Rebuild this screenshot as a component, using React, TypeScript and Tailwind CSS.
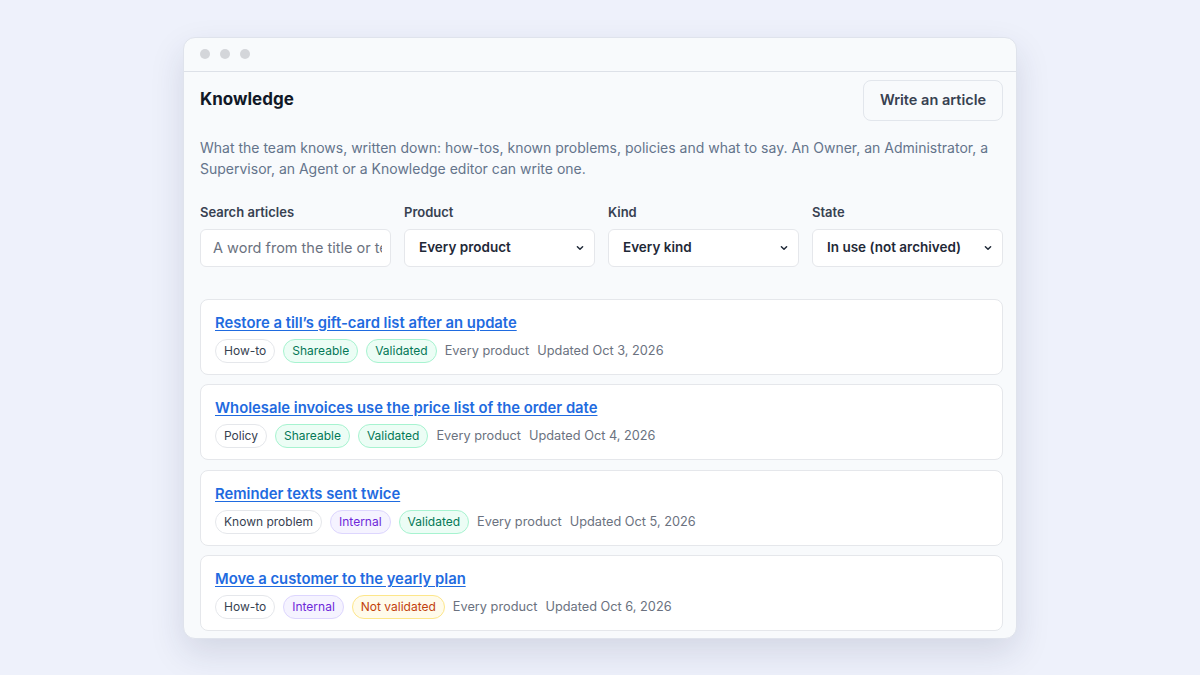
import * as React from 'react';

type Tone = 'plain' | 'green' | 'violet' | 'amber';

type Article = {
  title: string;
  kind: string;
  share: { label: string; tone: Tone };
  check: { label: string; tone: Tone };
  product: string;
  updated: string;
};

const articles: Article[] = [
  {
    title: 'Restore a till’s gift-card list after an update',
    kind: 'How-to',
    share: { label: 'Shareable', tone: 'green' },
    check: { label: 'Validated', tone: 'green' },
    product: 'Every product',
    updated: 'Updated Oct 3, 2026',
  },
  {
    title: 'Wholesale invoices use the price list of the order date',
    kind: 'Policy',
    share: { label: 'Shareable', tone: 'green' },
    check: { label: 'Validated', tone: 'green' },
    product: 'Every product',
    updated: 'Updated Oct 4, 2026',
  },
  {
    title: 'Reminder texts sent twice',
    kind: 'Known problem',
    share: { label: 'Internal', tone: 'violet' },
    check: { label: 'Validated', tone: 'green' },
    product: 'Every product',
    updated: 'Updated Oct 5, 2026',
  },
  {
    title: 'Move a customer to the yearly plan',
    kind: 'How-to',
    share: { label: 'Internal', tone: 'violet' },
    check: { label: 'Not validated', tone: 'amber' },
    product: 'Every product',
    updated: 'Updated Oct 6, 2026',
  },
];

const toneClass: Record<Tone, string> = {
  plain: 'bg-white border-[#e5e7eb] text-[#374151]',
  green: 'bg-[#ecfdf5] border-[#a7f3d0] text-[#047857]',
  violet: 'bg-[#f5f3ff] border-[#ddd6fe] text-[#6d28d9]',
  amber: 'bg-[#fffbeb] border-[#fde68a] text-[#c2410c]',
};

function Tag({ label, tone }: { label: string; tone: Tone }) {
  return (
    <span className={`inline-flex h-6 items-center rounded-full border px-2 text-xs ${toneClass[tone]}`}>
      {label}
    </span>
  );
}

function Chevron() {
  return (
    <svg
      className="pointer-events-none absolute right-2.5 top-1/2 -translate-y-1/2"
      width="10"
      height="10"
      viewBox="0 0 10 10"
      fill="none"
    >
      <path d="M2.4 3.8 5 6.3 7.6 3.8" stroke="#1f2937" strokeWidth="1.5" strokeLinecap="round" strokeLinejoin="round" />
    </svg>
  );
}

function SelectField({ label, value }: { label: string; value: string }) {
  return (
    <label className="flex flex-col gap-2">
      <span className="text-[13px] font-semibold leading-[18px] text-[#374151]">{label}</span>
      <div className="relative">
        <select
          defaultValue={value}
          className="h-[38px] w-full appearance-none rounded-md border border-[#e5e7eb] bg-white pl-3.5 pr-8 text-[13.5px] font-semibold text-[#1f2937] outline-none"
        >
          <option>{value}</option>
        </select>
        <Chevron />
      </div>
    </label>
  );
}

export default function App() {
  return (
    <div
      className="flex h-[675px] w-full items-center justify-center bg-[#eef1fb]"
      style={{ fontFamily: 'Inter, "Noto Sans", sans-serif' }}
    >
      <div className="flex h-[602px] w-[834px] flex-col overflow-hidden rounded-xl border border-[#dfe3ec] bg-[#f8fafc] shadow-[0_14px_34px_rgba(30,41,80,0.13)]">
        {/* title bar */}
        <div className="flex h-[34px] shrink-0 items-center gap-2.5 border-b border-[#dde1e8] px-4">
          <span className="h-2.5 w-2.5 rounded-full bg-[#d4d6da]" />
          <span className="h-2.5 w-2.5 rounded-full bg-[#d4d6da]" />
          <span className="h-2.5 w-2.5 rounded-full bg-[#d4d6da]" />
        </div>

        <div className="pl-4 pr-[13px] pt-2">
          <div className="flex items-center justify-between">
            <h1 className="text-[17px] font-bold text-[#111827]">Knowledge</h1>
            <button className="h-[41px] rounded-lg border border-[#e2e6ec] bg-[#f8fafc] px-4 text-[14.5px] font-semibold text-[#374151]">
              Write an article
            </button>
          </div>

          <p className="mt-4 text-[14px] leading-[21px] text-[#64748b]">
            What the team knows, written down: how-tos, known problems, policies and what to say. An Owner, an
            Administrator, a Supervisor, an Agent or a Knowledge editor can write one.
          </p>

          <div className="mt-6 grid grid-cols-4 gap-[13px]">
            <label className="flex flex-col gap-2">
              <span className="text-[13px] font-semibold leading-[18px] text-[#374151]">Search articles</span>
              <input
                placeholder="A word from the title or text"
                className="h-[38px] w-full rounded-md border border-[#e5e7eb] bg-white pl-3 pr-2 text-[14.5px] text-[#111827] outline-none placeholder:text-[#6b7280]"
              />
            </label>
            <SelectField label="Product" value="Every product" />
            <SelectField label="Kind" value="Every kind" />
            <SelectField label="State" value="In use (not archived)" />
          </div>

          <div className="mt-8 flex flex-col gap-[9.5px]">
            {articles.map((a) => (
              <div key={a.title} className="rounded-lg border border-[#e5e7eb] bg-white px-[14px] pb-[11px] pt-[13px]">
                <div className="text-[14.8px] font-semibold leading-5">
                  <a href="#" className="text-[#1f6be0] underline underline-offset-2">
                    {a.title}
                  </a>
                </div>
                <div className="mt-1.5 flex items-center gap-2 text-[12.75px] text-[#6b7280]">
                  <Tag label={a.kind} tone="plain" />
                  <Tag label={a.share.label} tone={a.share.tone} />
                  <Tag label={a.check.label} tone={a.check.tone} />
                  <span>{a.product}</span>
                  <span>{a.updated}</span>
                </div>
              </div>
            ))}
          </div>
        </div>
      </div>
    </div>
  );
}
